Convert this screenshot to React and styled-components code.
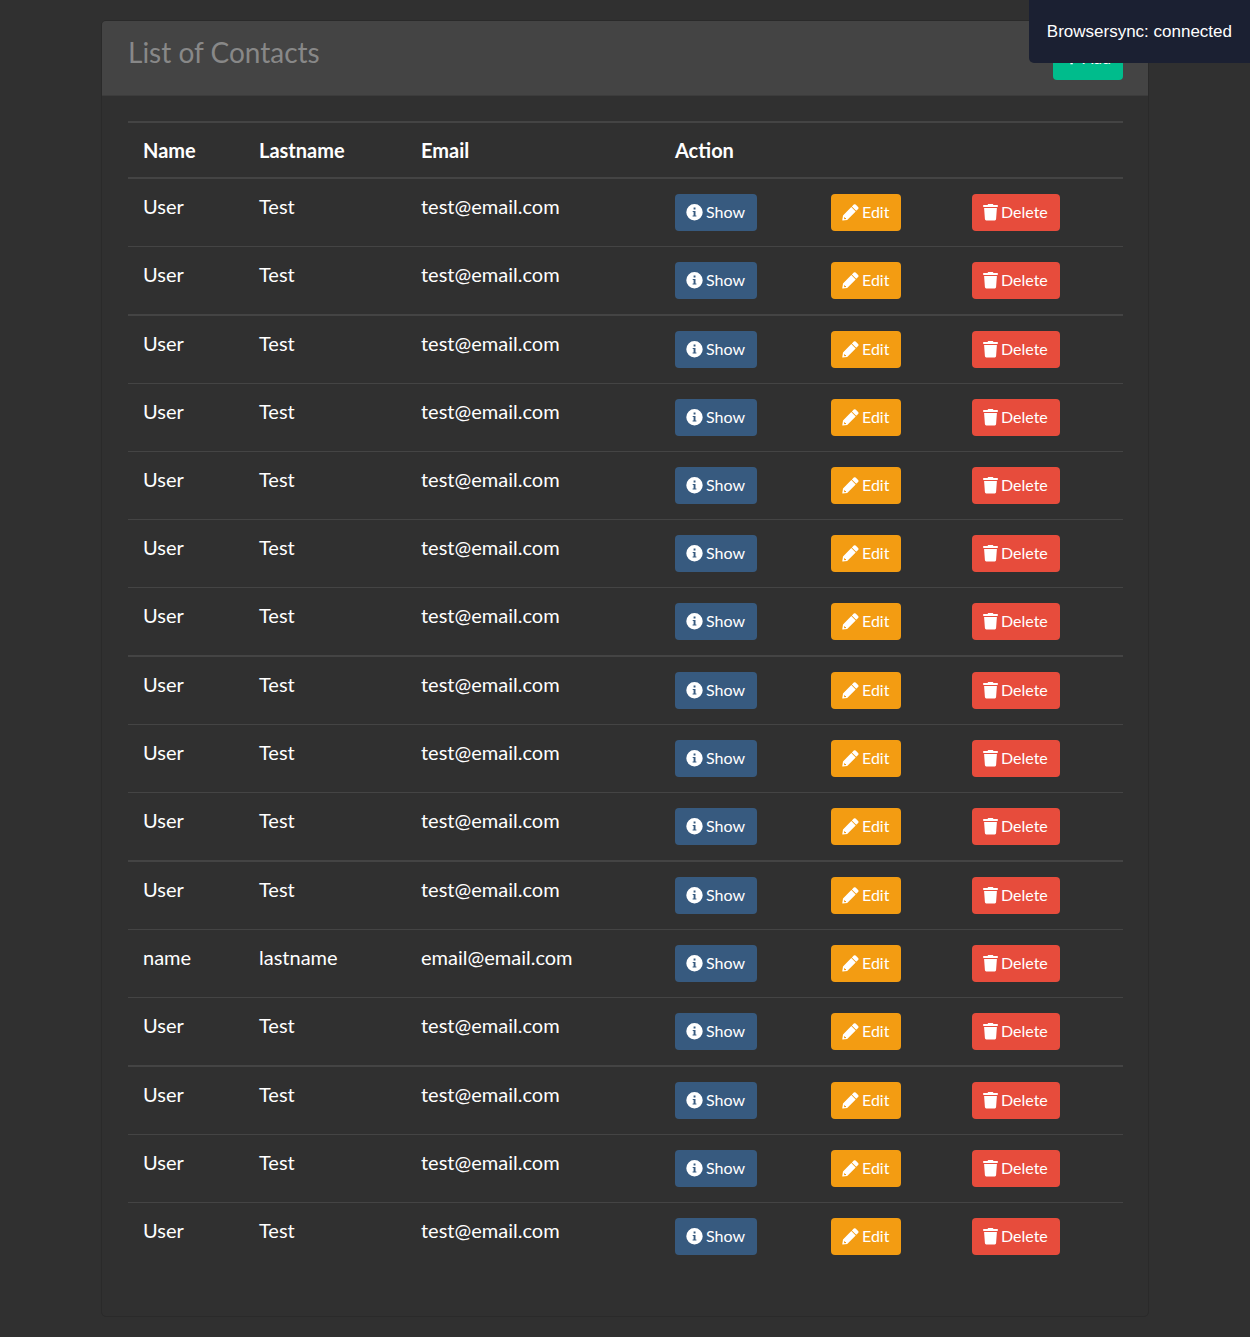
import React from "react";
import styled, { createGlobalStyle } from "styled-components";

const GlobalStyle = createGlobalStyle`
  *, *::before, *::after { box-sizing: border-box; }
  body {
    margin: 0;
    background: #303030;
    color: #fff;
    font-family: Lato, "Open Sans", sans-serif;
    font-size: 20px;
    line-height: 24px;
  }
`;

const Page = styled.main`
  padding: 20px 101px;
`;

const Card = styled.section`
  background: #303030;
  border: 1px solid #2a2a2a;
  border-radius: 5px;
  overflow: hidden;
`;

const CardHeader = styled.header`
  display: flex;
  justify-content: space-between;
  align-items: flex-start;
  padding: 15px 25px 15px 26px;
  background: #444;
  border-bottom: 1px solid #3c3c3c;
`;

const Title = styled.h1`
  margin: 0;
  color: #888;
  font-size: 28px;
  font-weight: 400;
  line-height: 32px;
`;

const CardBody = styled.div`
  padding: 25px 25px 26px 26px;
`;

const Table = styled.table`
  width: 100%;
  margin-bottom: 20px;
  table-layout: fixed;
  border-collapse: separate;
  border-spacing: 0;
`;

const Column = styled.col`
  width: ${({ $width }) => ($width ? `${$width}px` : "auto")};
`;

const HeadCell = styled.th`
  padding: 15px;
  border-top: 2px solid #444;
  border-bottom: 2px solid #444;
  font-weight: 700;
  text-align: left;
`;

const Cell = styled.td`
  padding: 15px;
  border-top: ${({ $line }) => $line}px solid #444;
  vertical-align: top;
  white-space: nowrap;
`;

const tones = {
  primary: "#375a7f",
  success: "#00bc8c",
  warning: "#f39c12",
  danger: "#e74c3c",
};

const Button = styled.button`
  display: flex;
  align-items: center;
  gap: 3px;
  height: ${({ $tall }) => ($tall ? 44 : 37)}px;
  padding: 0 12px 1px 11px;
  border: 0;
  border-radius: 4px;
  background: ${({ $tone }) => tones[$tone]};
  color: #fff;
  font-family: inherit;
  font-size: 16px;
  line-height: 24px;
  cursor: pointer;
`;

const Icon = styled.svg`
  flex: none;
  height: 17px;
  fill: currentColor;
`;

const Notice = styled.div`
  position: fixed;
  top: 0;
  right: 0;
  z-index: 10;
  padding: 20px 18px 19px;
  border-bottom-left-radius: 5px;
  background: #1b2032;
  font-family: "Liberation Sans", Arial, sans-serif;
  font-size: 17px;
  line-height: 24px;
`;

function InfoIcon() {
  return (
    <Icon width="17" viewBox="0 0 17 17" aria-hidden="true">
      <path
        fillRule="evenodd"
        d="M8.5 0a8.2 8.2 0 1 0 0 16.4a8.2 8.2 0 0 0 0-16.4ZM7.6 3.6h1.9v1.9H7.6ZM6.7 6.9h2.8v4.5h.9v1.2H6.6v-1.2h1V8.1h-.9Z"
      />
    </Icon>
  );
}

function PencilIcon() {
  return (
    <Icon width="17" viewBox="0 0 17 17" aria-hidden="true">
      <path d="M11.8.6q.9-.9 1.8 0l2.5 2.5q.9.9 0 1.8l-1.9 1.9-4.3-4.3Z" />
      <path
        fillRule="evenodd"
        d="M9.3 3.1l4.4 4.4-8.5 8.5-4.4.6q-.5 0-.5-.5l.7-4.5ZM2.3 13.2l-.3 1.4.6.6 1.4-.3v-1H3v-.7Z"
      />
    </Icon>
  );
}

function TrashIcon() {
  return (
    <Icon width="15" viewBox="0 0 15 17" aria-hidden="true">
      <path d="M.2 1h4.3l.7-1h4.6l.7 1h4.3v2H.2ZM1.1 4h12.8l-.8 11.1q-.1 1.3-1.3 1.3H3.2q-1.2 0-1.3-1.3Z" />
    </Icon>
  );
}

function PlusIcon() {
  return (
    <Icon width="15" viewBox="0 0 15 17" aria-hidden="true">
      <path d="M6.4 1.5h2.4v4.8h5.2v2.4H8.8v6.5H6.4V8.7H1.2V6.3h5.2Z" />
    </Icon>
  );
}

const user = { name: "User", lastname: "Test", email: "test@email.com" };
const contacts = [
  ...Array(11).fill(user),
  { name: "name", lastname: "lastname", email: "email@email.com" },
  ...Array(4).fill(user),
];

const columnWidths = [116, 162, 254, 156, 141, null];
const strongLines = [2, 7, 10, 13];

function lineWidth(index) {
  if (index === 0) return 0;
  return strongLines.includes(index) ? 2 : 1;
}

function ContactRow({ contact, line }) {
  return (
    <tr>
      <Cell $line={line}>{contact.name}</Cell>
      <Cell $line={line}>{contact.lastname}</Cell>
      <Cell $line={line}>{contact.email}</Cell>
      <Cell $line={line}>
        <Button type="button" $tone="primary"><InfoIcon />Show</Button>
      </Cell>
      <Cell $line={line}>
        <Button type="button" $tone="warning"><PencilIcon />Edit</Button>
      </Cell>
      <Cell $line={line}>
        <Button type="button" $tone="danger"><TrashIcon />Delete</Button>
      </Cell>
    </tr>
  );
}

export default function App() {
  return (
    <>
      <GlobalStyle />
      <Page>
        <Card>
          <CardHeader>
            <Title>List of Contacts</Title>
            <Button type="button" $tone="success" $tall><PlusIcon />Add</Button>
          </CardHeader>
          <CardBody>
            <Table>
              <colgroup>
                {columnWidths.map((width, i) => (
                  <Column key={i} $width={width} />
                ))}
              </colgroup>
              <thead>
                <tr>
                  <HeadCell scope="col">Name</HeadCell>
                  <HeadCell scope="col">Lastname</HeadCell>
                  <HeadCell scope="col">Email</HeadCell>
                  <HeadCell scope="colgroup" colSpan={3}>Action</HeadCell>
                </tr>
              </thead>
              <tbody>
                {contacts.map((contact, i) => (
                  <ContactRow key={i} contact={contact} line={lineWidth(i)} />
                ))}
              </tbody>
            </Table>
          </CardBody>
        </Card>
      </Page>
      <Notice role="status">Browsersync: connected</Notice>
    </>
  );
}
